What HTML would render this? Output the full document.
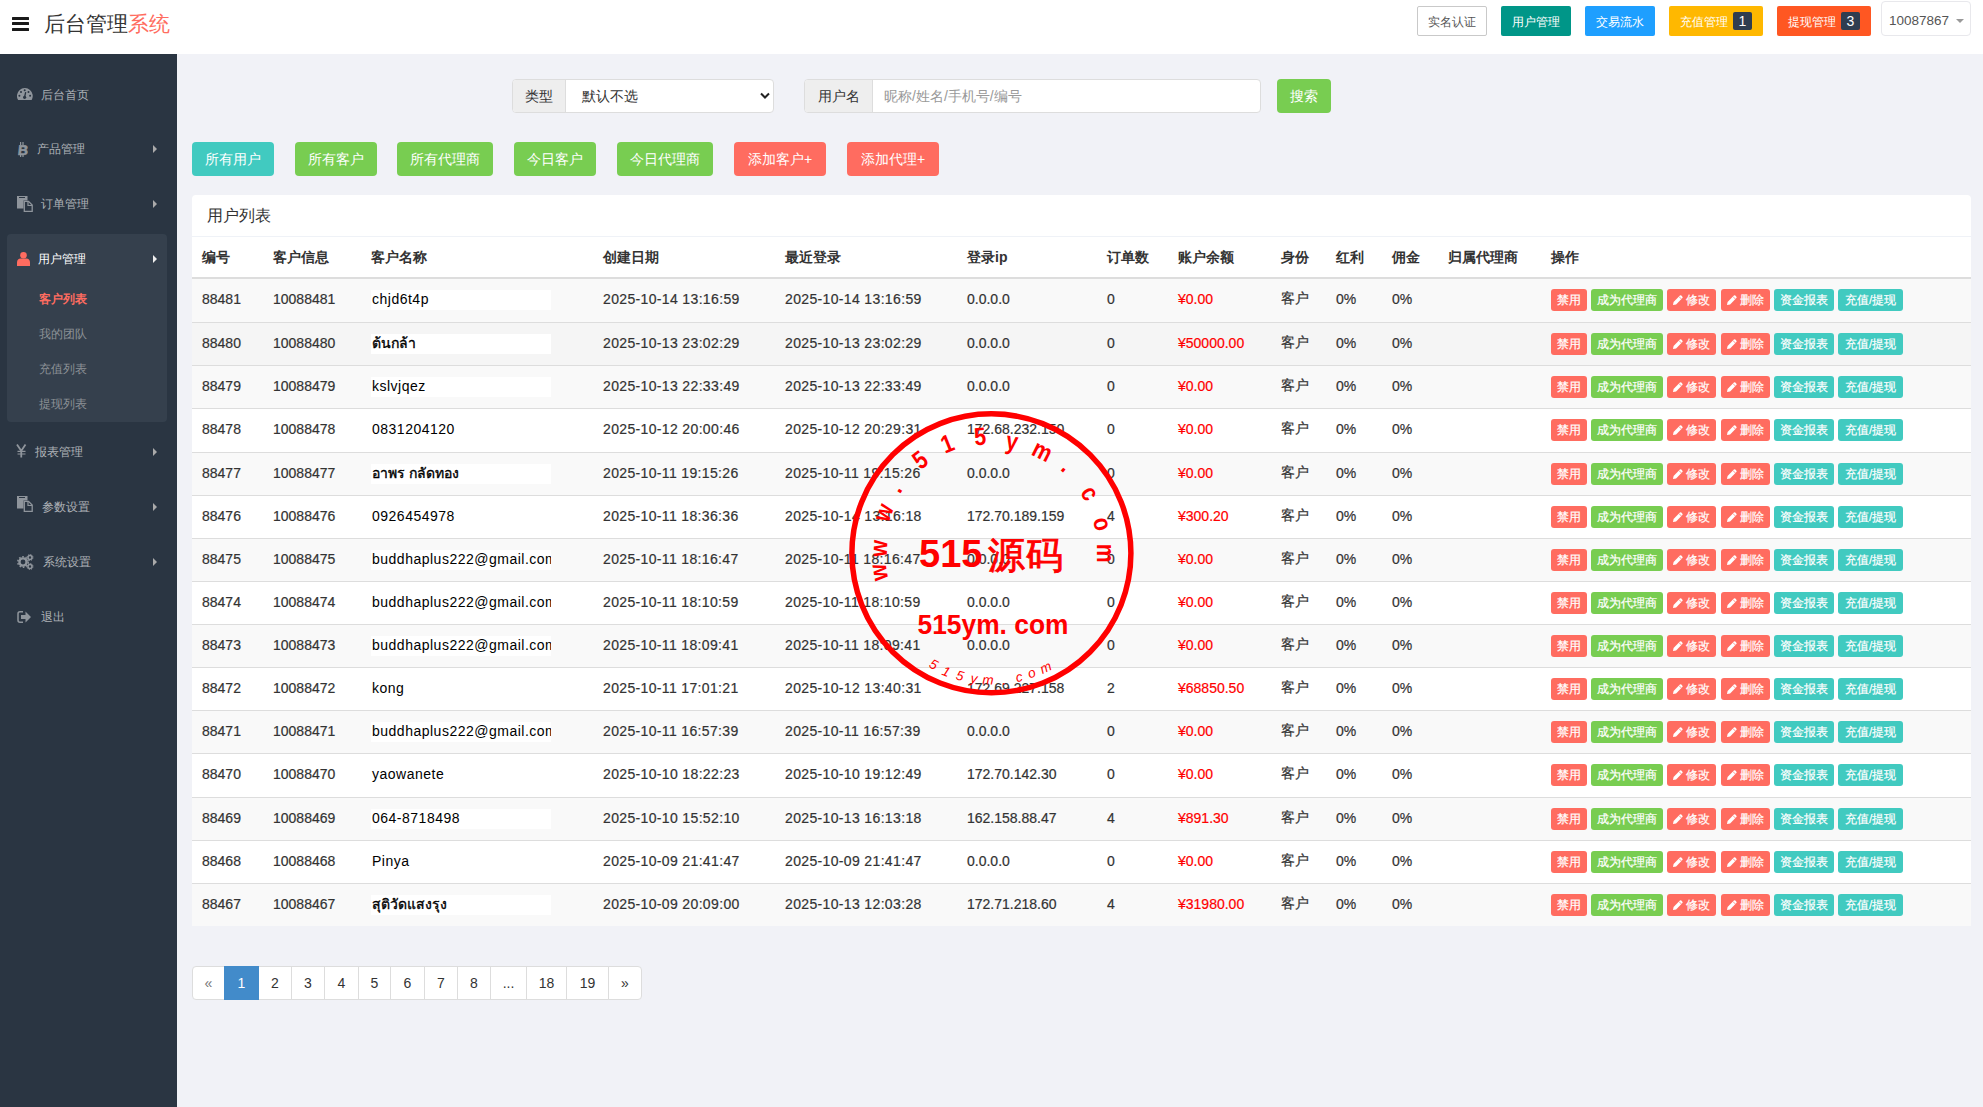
<!DOCTYPE html>
<html><head><meta charset="utf-8">
<style>
*{box-sizing:border-box;margin:0;padding:0}
html,body{width:1983px;height:1107px;overflow:hidden}
body{background:#f1f2f7;font-family:"Liberation Sans",sans-serif;color:#333;font-size:14px;position:relative}
.abs{position:absolute}
/* header */
#hdr{left:0;top:0;width:1983px;height:54px;background:#fff}
.bars{left:12px;top:17px;width:17px;height:14px}
.bars i{position:absolute;left:0;width:17px;height:3.2px;background:#1a1a1a;border-radius:0.5px}
.title{left:44px;top:9.5px;font-size:21px;line-height:28px;color:#333;white-space:nowrap}
.title span{color:#ff6c60}
.tb{top:6px;height:30px;line-height:32px;font-size:12px;color:#fff;text-align:center;border-radius:2px;white-space:nowrap}
.badge{display:inline-block;width:19px;height:18px;line-height:19px;background:#2f3d50;color:#fff;border-radius:2px;font-size:14px;vertical-align:0px;margin-left:5px}
#user{left:1881px;top:1px;width:90px;height:35px;border:1px solid #e8e8ec;border-radius:4px;background:#fff}
/* sidebar */
#side{left:0;top:54px;width:177px;height:1053px;background:#2a3542}
.mi{position:absolute;left:0;width:177px;height:20px;font-size:12px;color:#aeb2b7;white-space:nowrap}
.mi .t{position:absolute;top:2px;line-height:16px}
.mi svg{position:absolute}
.arr{position:absolute;left:153px;width:0;height:0;border-left:4px solid #aaa;border-top:4px solid transparent;border-bottom:4px solid transparent}
#act{left:7px;top:180px;width:160px;height:188px;background:#35404d;border-radius:4px}
/* content */
.ig{top:79px;height:34px;border:1px solid #ddd;border-radius:4px;background:#fff;overflow:hidden}
.ig .ad{position:absolute;left:0;top:0;height:32px;line-height:32px;background:#eee;border-right:1px solid #ddd;text-align:center;font-size:14px;color:#333}
.ig .v{position:absolute;top:0;height:32px;line-height:32px;font-size:14px}
.btn{position:absolute;height:34px;line-height:34px;color:#fff;font-size:14px;text-align:center;border-radius:4px;white-space:nowrap}
.g{background:#78cd51}.r{background:#ff6c60}.tq{background:#41cac0}
#panel{left:192px;top:195px;width:1779px;height:731px;background:#fff;border-radius:4px 4px 0 0}
#ph{position:absolute;left:0;top:0;width:100%;height:42px;border-bottom:1px solid #eff2f7}
#ph span{position:absolute;left:15px;top:11px;font-size:16px;line-height:20px;color:#333}
table{position:absolute;left:0;top:42px;width:1779px;border-collapse:separate;border-spacing:0;table-layout:fixed}
th{height:42px;text-align:left;font-weight:bold;font-size:14px;padding:2px 0 0 10px;border-bottom:2px solid #ddd;vertical-align:middle;white-space:nowrap}
td{-webkit-text-stroke:0.2px currentColor;padding:0 0 2px 10px;vertical-align:middle;white-space:nowrap;font-size:14px;color:#333;border-top:1px solid #ddd;overflow:hidden}
tbody tr{height:43.13px}
tbody tr:nth-child(odd){background:#f9f9f9}
tbody tr.hov{background:#f5f5f5}
tbody tr td{padding-bottom:0px}
tbody tr:first-child td{border-top:0;padding-bottom:2px}
.nm{display:block;width:180px;height:20px;line-height:18px;padding-bottom:2px;background:#fff;color:#000;padding-left:1px;overflow:hidden}
.m{color:#f00}
.tx{position:relative;top:-1px}
.dt{letter-spacing:0.35px}
.nm{letter-spacing:0.5px;-webkit-text-stroke:0}
.pc{display:inline-block;vertical-align:-1px;margin-right:3px}
.ab{display:inline-block;height:22px;line-height:22px;font-size:12px;color:#fff;border-radius:3px;padding:0 6px;margin-right:4px;vertical-align:middle}
/* pagination */
#pg{left:192px;top:966px;height:34px;display:flex}
#pg a{display:block;height:34px;line-height:32px;border:1px solid #ddd;margin-left:-1px;background:#fff;color:#333;text-align:center;font-size:14px}
#pg a:first-child{margin-left:0;border-radius:4px 0 0 4px}
#pg a:last-child{border-radius:0 4px 4px 0}
#pg a.on{background:#428bca;border-color:#428bca;color:#fff;position:relative}
</style></head><body>
<div id="hdr" class="abs">
  <div class="abs bars"><i style="top:0"></i><i style="top:5px"></i><i style="top:11px"></i></div>
  <div class="abs title">后台管理<span>系统</span></div>
  <div class="abs tb" style="left:1417px;width:70px;background:#fff;border:1px solid #c9c9c9;color:#555;line-height:30px">实名认证</div>
  <div class="abs tb" style="left:1501px;width:70px;background:#009688">用户管理</div>
  <div class="abs tb" style="left:1585px;width:70px;background:#1e9fff">交易流水</div>
  <div class="abs tb" style="left:1669px;width:94px;background:#ffb800">充值管理<span class="badge">1</span></div>
  <div class="abs tb" style="left:1777px;width:94px;background:#ff5722">提现管理<span class="badge">3</span></div>
  <div id="user" class="abs"><span class="abs" style="left:7px;top:9.5px;font-size:13.5px;line-height:18px;color:#555">10087867</span><span class="abs" style="left:74px;top:16.5px;border-top:4px solid #999;border-left:4px solid transparent;border-right:4px solid transparent;width:0;height:0"></span></div>
</div>
<div id="side" class="abs">
  <div id="act" class="abs"></div>
  <svg class="abs" style="left:17px;top:34px" width="16" height="12" viewBox="0 0 16 12"><path d="M1.1 12 A7.9 7.9 0 1 1 14.6 12 Z" fill="#8f959c"/><circle cx="7.7" cy="2.3" r="1" fill="#2a3542"/><circle cx="4" cy="3.9" r="1" fill="#2a3542"/><circle cx="11.5" cy="3.9" r="1" fill="#2a3542"/><circle cx="2.4" cy="7.8" r="1" fill="#2a3542"/><circle cx="13.1" cy="7.8" r="1" fill="#2a3542"/><path d="M8.7 4.2 L7.7 8.5" stroke="#2a3542" stroke-width="1.3"/><circle cx="7.6" cy="9.3" r="1.6" fill="#2a3542"/></svg>
  <div class="mi" style="top:31px"><span class="t" style="left:41px">后台首页</span></div>
  <svg class="abs" style="left:17px;top:88px" width="11" height="15" viewBox="0 0 11 15"><text x="0.3" y="12.6" font-family="Liberation Sans" font-weight="bold" font-size="14" fill="#8f959c" stroke="#8f959c" stroke-width="0.7" transform="translate(1.5 0) skewX(-6)">B</text><rect x="3" y="0" width="1.2" height="3" fill="#8f959c"/><rect x="5.4" y="0" width="1.2" height="3" fill="#8f959c"/><rect x="3" y="12" width="1.2" height="3" fill="#8f959c"/><rect x="5.4" y="12" width="1.2" height="3" fill="#8f959c"/></svg>
  <div class="mi" style="top:85px"><span class="t" style="left:37px">产品管理</span><i class="arr" style="top:6px"></i></div>
  <svg class="abs" style="left:17px;top:142px" width="16" height="16" viewBox="0 0 16 16"><path d="M0 0 H10.5 V4.5 H6.5 V12.5 H0 Z" fill="#8f959c"/><rect x="2" y="1" width="6" height="1" fill="#2a3542"/><path d="M7.3 5.3 H11.5 L15.2 9 V15.3 H7.3 Z" fill="none" stroke="#8f959c" stroke-width="1.3"/><path d="M11 5.5 V9.5 H15" fill="none" stroke="#8f959c" stroke-width="1.2"/></svg>
  <div class="mi" style="top:140px"><span class="t" style="left:41px">订单管理</span><i class="arr" style="top:6px"></i></div>
  <svg class="abs" style="left:17px;top:198px" width="13" height="14" viewBox="0 0 13 14"><circle cx="6.5" cy="3.3" r="3.3" fill="#ff6c60"/><path d="M0 14 V10.5 C0 8 1.6 6.6 3.6 6.6 H9.4 C11.4 6.6 13 8 13 10.5 V14 Z" fill="#ff6c60"/></svg>
  <div class="mi" style="top:195px;color:#fff"><span class="t" style="left:38px">用户管理</span><i class="arr" style="top:6px;border-left-color:#eee"></i></div>
  <div class="mi" style="top:235px;color:#ff6c60;font-weight:bold"><span class="t" style="left:39px">客户列表</span></div>
  <div class="mi" style="top:270px;color:#8c9196"><span class="t" style="left:39px">我的团队</span></div>
  <div class="mi" style="top:305px;color:#8c9196"><span class="t" style="left:39px">充值列表</span></div>
  <div class="mi" style="top:340px;color:#8c9196"><span class="t" style="left:39px">提现列表</span></div>
  <svg class="abs" style="left:16px;top:390px" width="12" height="14" viewBox="0 0 12 14"><path d="M1 0.5 L5 6.5 M9.5 0.5 L5.5 6.5 M5.25 6 V13.5" stroke="#8f959c" stroke-width="1.8" fill="none"/><path d="M1.5 7.3 H9.5 M1.5 10 H9.5" stroke="#8f959c" stroke-width="1.2"/></svg>
  <div class="mi" style="top:388px"><span class="t" style="left:35px">报表管理</span><i class="arr" style="top:6px"></i></div>
  <svg class="abs" style="left:17px;top:197px;top:442px" width="16" height="16" viewBox="0 0 16 16"><path d="M0 0 H10.5 V4.5 H6.5 V12.5 H0 Z" fill="#8f959c"/><rect x="2" y="1" width="6" height="1" fill="#2a3542"/><path d="M7.3 5.3 H11.5 L15.2 9 V15.3 H7.3 Z" fill="none" stroke="#8f959c" stroke-width="1.3"/><path d="M11 5.5 V9.5 H15" fill="none" stroke="#8f959c" stroke-width="1.2"/></svg>
  <div class="mi" style="top:443px"><span class="t" style="left:42px">参数设置</span><i class="arr" style="top:6px"></i></div>
  <svg class="abs" style="left:17px;top:500px" width="17" height="16" viewBox="0 0 17 16"><circle cx="6" cy="8" r="3.6" fill="none" stroke="#8f959c" stroke-width="2.4"/><circle cx="6" cy="8" r="5.2" fill="none" stroke="#8f959c" stroke-width="1.6" stroke-dasharray="1.6 1.7"/><circle cx="13" cy="3.5" r="2" fill="none" stroke="#8f959c" stroke-width="1.6"/><circle cx="13" cy="3.5" r="3" fill="none" stroke="#8f959c" stroke-width="1" stroke-dasharray="1.2 1.15"/><circle cx="13" cy="12.5" r="2" fill="none" stroke="#8f959c" stroke-width="1.6"/><circle cx="13" cy="12.5" r="3" fill="none" stroke="#8f959c" stroke-width="1" stroke-dasharray="1.2 1.15"/></svg>
  <div class="mi" style="top:498px"><span class="t" style="left:43px">系统设置</span><i class="arr" style="top:6px"></i></div>
  <svg class="abs" style="left:17px;top:557px" width="15" height="12" viewBox="0 0 15 12"><path d="M6 0.8 H3 C1.8 0.8 1 1.6 1 2.8 V9.2 C1 10.4 1.8 11.2 3 11.2 H6" fill="none" stroke="#8f959c" stroke-width="1.5"/><path d="M4 4 H8.5 V0.5 L14 6 L8.5 11.5 V8 H4 Z" fill="#8f959c"/></svg>
  <div class="mi" style="top:553px"><span class="t" style="left:41px">退出</span></div>
</div>
<!-- search -->
<div class="abs ig" style="left:512px;width:262px">
  <div class="ad" style="width:53px">类型</div>
  <div class="v" style="left:69px;color:#333">默认不选</div>
  <svg class="abs" style="left:247px;top:12px" width="10" height="8" viewBox="0 0 10 8"><path d="M1 1.5 L5 5.5 L9 1.5" stroke="#222" stroke-width="2" fill="none"/></svg>
</div>
<div class="abs ig" style="left:804px;width:457px">
  <div class="ad" style="width:68px">用户名</div>
  <div class="v" style="left:79px;color:#999">昵称/姓名/手机号/编号</div>
</div>
<div class="btn g" style="left:1277px;top:79px;width:54px">搜索</div>
<div class="btn tq" style="left:192px;top:142px;width:82px">所有用户</div>
<div class="btn g" style="left:295px;top:142px;width:82px">所有客户</div>
<div class="btn g" style="left:397px;top:142px;width:96px">所有代理商</div>
<div class="btn g" style="left:514px;top:142px;width:82px">今日客户</div>
<div class="btn g" style="left:617px;top:142px;width:96px">今日代理商</div>
<div class="btn r" style="left:734px;top:142px;width:92px">添加客户+</div>
<div class="btn r" style="left:847px;top:142px;width:92px">添加代理+</div>
<div id="panel" class="abs">
  <div id="ph"><span>用户列表</span></div>
  <table>
    <colgroup><col style="width:71px"><col style="width:98px"><col style="width:232px"><col style="width:182px"><col style="width:182px"><col style="width:140px"><col style="width:71px"><col style="width:103px"><col style="width:55px"><col style="width:56px"><col style="width:56px"><col style="width:103px"><col></colgroup>
    <thead><tr><th>编号</th><th>客户信息</th><th>客户名称</th><th>创建日期</th><th>最近登录</th><th>登录ip</th><th>订单数</th><th>账户余额</th><th>身份</th><th>红利</th><th>佣金</th><th>归属代理商</th><th>操作</th></tr></thead>
    <tbody id="tb">
<tr><td><span class="tx">88481</span></td><td><span class="tx">10088481</span></td><td><span class="nm">chjd6t4p</span></td><td class="dt"><span class="tx">2025-10-14 13:16:59</span></td><td class="dt"><span class="tx">2025-10-14 13:16:59</span></td><td><span class="tx">0.0.0.0</span></td><td><span class="tx">0</span></td><td class="m"><span class="tx">¥0.00</span></td><td><span class="tx">客户</span></td><td><span class="tx">0%</span></td><td><span class="tx">0%</span></td><td></td><td class="ops"><span class="ab r">禁用</span><span class="ab g">成为代理商</span><span class="ab r"><svg class="pc" width="10" height="10" viewBox="0 0 10 10"><path d="M0 10 L0.6 6.9 L6.9 0.6 Q7.6 0 8.3 0.6 L9.4 1.7 Q10 2.4 9.4 3.1 L3.1 9.4 Z" fill="#fff"/><path d="M6 1.6 L8.4 4" stroke="#ff6c60" stroke-width="0.7"/></svg>修改</span><span class="ab r" style="margin-left:1px"><svg class="pc" width="10" height="10" viewBox="0 0 10 10"><path d="M0 10 L0.6 6.9 L6.9 0.6 Q7.6 0 8.3 0.6 L9.4 1.7 Q10 2.4 9.4 3.1 L3.1 9.4 Z" fill="#fff"/><path d="M6 1.6 L8.4 4" stroke="#ff6c60" stroke-width="0.7"/></svg>删除</span><span class="ab tq">资金报表</span><span class="ab tq" style="padding:0 7px">充值/提现</span></td></tr>
<tr class="hov"><td><span class="tx">88480</span></td><td><span class="tx">10088480</span></td><td><span class="nm" style="letter-spacing:0;-webkit-text-stroke:0.35px #000">ต้นกล้า</span></td><td class="dt"><span class="tx">2025-10-13 23:02:29</span></td><td class="dt"><span class="tx">2025-10-13 23:02:29</span></td><td><span class="tx">0.0.0.0</span></td><td><span class="tx">0</span></td><td class="m"><span class="tx">¥50000.00</span></td><td><span class="tx">客户</span></td><td><span class="tx">0%</span></td><td><span class="tx">0%</span></td><td></td><td class="ops"><span class="ab r">禁用</span><span class="ab g">成为代理商</span><span class="ab r"><svg class="pc" width="10" height="10" viewBox="0 0 10 10"><path d="M0 10 L0.6 6.9 L6.9 0.6 Q7.6 0 8.3 0.6 L9.4 1.7 Q10 2.4 9.4 3.1 L3.1 9.4 Z" fill="#fff"/><path d="M6 1.6 L8.4 4" stroke="#ff6c60" stroke-width="0.7"/></svg>修改</span><span class="ab r" style="margin-left:1px"><svg class="pc" width="10" height="10" viewBox="0 0 10 10"><path d="M0 10 L0.6 6.9 L6.9 0.6 Q7.6 0 8.3 0.6 L9.4 1.7 Q10 2.4 9.4 3.1 L3.1 9.4 Z" fill="#fff"/><path d="M6 1.6 L8.4 4" stroke="#ff6c60" stroke-width="0.7"/></svg>删除</span><span class="ab tq">资金报表</span><span class="ab tq" style="padding:0 7px">充值/提现</span></td></tr>
<tr><td><span class="tx">88479</span></td><td><span class="tx">10088479</span></td><td><span class="nm">kslvjqez</span></td><td class="dt"><span class="tx">2025-10-13 22:33:49</span></td><td class="dt"><span class="tx">2025-10-13 22:33:49</span></td><td><span class="tx">0.0.0.0</span></td><td><span class="tx">0</span></td><td class="m"><span class="tx">¥0.00</span></td><td><span class="tx">客户</span></td><td><span class="tx">0%</span></td><td><span class="tx">0%</span></td><td></td><td class="ops"><span class="ab r">禁用</span><span class="ab g">成为代理商</span><span class="ab r"><svg class="pc" width="10" height="10" viewBox="0 0 10 10"><path d="M0 10 L0.6 6.9 L6.9 0.6 Q7.6 0 8.3 0.6 L9.4 1.7 Q10 2.4 9.4 3.1 L3.1 9.4 Z" fill="#fff"/><path d="M6 1.6 L8.4 4" stroke="#ff6c60" stroke-width="0.7"/></svg>修改</span><span class="ab r" style="margin-left:1px"><svg class="pc" width="10" height="10" viewBox="0 0 10 10"><path d="M0 10 L0.6 6.9 L6.9 0.6 Q7.6 0 8.3 0.6 L9.4 1.7 Q10 2.4 9.4 3.1 L3.1 9.4 Z" fill="#fff"/><path d="M6 1.6 L8.4 4" stroke="#ff6c60" stroke-width="0.7"/></svg>删除</span><span class="ab tq">资金报表</span><span class="ab tq" style="padding:0 7px">充值/提现</span></td></tr>
<tr><td><span class="tx">88478</span></td><td><span class="tx">10088478</span></td><td><span class="nm">0831204120</span></td><td class="dt"><span class="tx">2025-10-12 20:00:46</span></td><td class="dt"><span class="tx">2025-10-12 20:29:31</span></td><td><span class="tx">172.68.232.150</span></td><td><span class="tx">0</span></td><td class="m"><span class="tx">¥0.00</span></td><td><span class="tx">客户</span></td><td><span class="tx">0%</span></td><td><span class="tx">0%</span></td><td></td><td class="ops"><span class="ab r">禁用</span><span class="ab g">成为代理商</span><span class="ab r"><svg class="pc" width="10" height="10" viewBox="0 0 10 10"><path d="M0 10 L0.6 6.9 L6.9 0.6 Q7.6 0 8.3 0.6 L9.4 1.7 Q10 2.4 9.4 3.1 L3.1 9.4 Z" fill="#fff"/><path d="M6 1.6 L8.4 4" stroke="#ff6c60" stroke-width="0.7"/></svg>修改</span><span class="ab r" style="margin-left:1px"><svg class="pc" width="10" height="10" viewBox="0 0 10 10"><path d="M0 10 L0.6 6.9 L6.9 0.6 Q7.6 0 8.3 0.6 L9.4 1.7 Q10 2.4 9.4 3.1 L3.1 9.4 Z" fill="#fff"/><path d="M6 1.6 L8.4 4" stroke="#ff6c60" stroke-width="0.7"/></svg>删除</span><span class="ab tq">资金报表</span><span class="ab tq" style="padding:0 7px">充值/提现</span></td></tr>
<tr><td><span class="tx">88477</span></td><td><span class="tx">10088477</span></td><td><span class="nm" style="letter-spacing:0;-webkit-text-stroke:0.35px #000">อาพร กลัดทอง</span></td><td class="dt"><span class="tx">2025-10-11 19:15:26</span></td><td class="dt"><span class="tx">2025-10-11 19:15:26</span></td><td><span class="tx">0.0.0.0</span></td><td><span class="tx">0</span></td><td class="m"><span class="tx">¥0.00</span></td><td><span class="tx">客户</span></td><td><span class="tx">0%</span></td><td><span class="tx">0%</span></td><td></td><td class="ops"><span class="ab r">禁用</span><span class="ab g">成为代理商</span><span class="ab r"><svg class="pc" width="10" height="10" viewBox="0 0 10 10"><path d="M0 10 L0.6 6.9 L6.9 0.6 Q7.6 0 8.3 0.6 L9.4 1.7 Q10 2.4 9.4 3.1 L3.1 9.4 Z" fill="#fff"/><path d="M6 1.6 L8.4 4" stroke="#ff6c60" stroke-width="0.7"/></svg>修改</span><span class="ab r" style="margin-left:1px"><svg class="pc" width="10" height="10" viewBox="0 0 10 10"><path d="M0 10 L0.6 6.9 L6.9 0.6 Q7.6 0 8.3 0.6 L9.4 1.7 Q10 2.4 9.4 3.1 L3.1 9.4 Z" fill="#fff"/><path d="M6 1.6 L8.4 4" stroke="#ff6c60" stroke-width="0.7"/></svg>删除</span><span class="ab tq">资金报表</span><span class="ab tq" style="padding:0 7px">充值/提现</span></td></tr>
<tr><td><span class="tx">88476</span></td><td><span class="tx">10088476</span></td><td><span class="nm">0926454978</span></td><td class="dt"><span class="tx">2025-10-11 18:36:36</span></td><td class="dt"><span class="tx">2025-10-14 13:16:18</span></td><td><span class="tx">172.70.189.159</span></td><td><span class="tx">4</span></td><td class="m"><span class="tx">¥300.20</span></td><td><span class="tx">客户</span></td><td><span class="tx">0%</span></td><td><span class="tx">0%</span></td><td></td><td class="ops"><span class="ab r">禁用</span><span class="ab g">成为代理商</span><span class="ab r"><svg class="pc" width="10" height="10" viewBox="0 0 10 10"><path d="M0 10 L0.6 6.9 L6.9 0.6 Q7.6 0 8.3 0.6 L9.4 1.7 Q10 2.4 9.4 3.1 L3.1 9.4 Z" fill="#fff"/><path d="M6 1.6 L8.4 4" stroke="#ff6c60" stroke-width="0.7"/></svg>修改</span><span class="ab r" style="margin-left:1px"><svg class="pc" width="10" height="10" viewBox="0 0 10 10"><path d="M0 10 L0.6 6.9 L6.9 0.6 Q7.6 0 8.3 0.6 L9.4 1.7 Q10 2.4 9.4 3.1 L3.1 9.4 Z" fill="#fff"/><path d="M6 1.6 L8.4 4" stroke="#ff6c60" stroke-width="0.7"/></svg>删除</span><span class="ab tq">资金报表</span><span class="ab tq" style="padding:0 7px">充值/提现</span></td></tr>
<tr><td><span class="tx">88475</span></td><td><span class="tx">10088475</span></td><td><span class="nm">buddhaplus222@gmail.com</span></td><td class="dt"><span class="tx">2025-10-11 18:16:47</span></td><td class="dt"><span class="tx">2025-10-11 18:16:47</span></td><td><span class="tx">0.0.0.0</span></td><td><span class="tx">0</span></td><td class="m"><span class="tx">¥0.00</span></td><td><span class="tx">客户</span></td><td><span class="tx">0%</span></td><td><span class="tx">0%</span></td><td></td><td class="ops"><span class="ab r">禁用</span><span class="ab g">成为代理商</span><span class="ab r"><svg class="pc" width="10" height="10" viewBox="0 0 10 10"><path d="M0 10 L0.6 6.9 L6.9 0.6 Q7.6 0 8.3 0.6 L9.4 1.7 Q10 2.4 9.4 3.1 L3.1 9.4 Z" fill="#fff"/><path d="M6 1.6 L8.4 4" stroke="#ff6c60" stroke-width="0.7"/></svg>修改</span><span class="ab r" style="margin-left:1px"><svg class="pc" width="10" height="10" viewBox="0 0 10 10"><path d="M0 10 L0.6 6.9 L6.9 0.6 Q7.6 0 8.3 0.6 L9.4 1.7 Q10 2.4 9.4 3.1 L3.1 9.4 Z" fill="#fff"/><path d="M6 1.6 L8.4 4" stroke="#ff6c60" stroke-width="0.7"/></svg>删除</span><span class="ab tq">资金报表</span><span class="ab tq" style="padding:0 7px">充值/提现</span></td></tr>
<tr><td><span class="tx">88474</span></td><td><span class="tx">10088474</span></td><td><span class="nm">buddhaplus222@gmail.com</span></td><td class="dt"><span class="tx">2025-10-11 18:10:59</span></td><td class="dt"><span class="tx">2025-10-11 18:10:59</span></td><td><span class="tx">0.0.0.0</span></td><td><span class="tx">0</span></td><td class="m"><span class="tx">¥0.00</span></td><td><span class="tx">客户</span></td><td><span class="tx">0%</span></td><td><span class="tx">0%</span></td><td></td><td class="ops"><span class="ab r">禁用</span><span class="ab g">成为代理商</span><span class="ab r"><svg class="pc" width="10" height="10" viewBox="0 0 10 10"><path d="M0 10 L0.6 6.9 L6.9 0.6 Q7.6 0 8.3 0.6 L9.4 1.7 Q10 2.4 9.4 3.1 L3.1 9.4 Z" fill="#fff"/><path d="M6 1.6 L8.4 4" stroke="#ff6c60" stroke-width="0.7"/></svg>修改</span><span class="ab r" style="margin-left:1px"><svg class="pc" width="10" height="10" viewBox="0 0 10 10"><path d="M0 10 L0.6 6.9 L6.9 0.6 Q7.6 0 8.3 0.6 L9.4 1.7 Q10 2.4 9.4 3.1 L3.1 9.4 Z" fill="#fff"/><path d="M6 1.6 L8.4 4" stroke="#ff6c60" stroke-width="0.7"/></svg>删除</span><span class="ab tq">资金报表</span><span class="ab tq" style="padding:0 7px">充值/提现</span></td></tr>
<tr><td><span class="tx">88473</span></td><td><span class="tx">10088473</span></td><td><span class="nm">buddhaplus222@gmail.com</span></td><td class="dt"><span class="tx">2025-10-11 18:09:41</span></td><td class="dt"><span class="tx">2025-10-11 18:09:41</span></td><td><span class="tx">0.0.0.0</span></td><td><span class="tx">0</span></td><td class="m"><span class="tx">¥0.00</span></td><td><span class="tx">客户</span></td><td><span class="tx">0%</span></td><td><span class="tx">0%</span></td><td></td><td class="ops"><span class="ab r">禁用</span><span class="ab g">成为代理商</span><span class="ab r"><svg class="pc" width="10" height="10" viewBox="0 0 10 10"><path d="M0 10 L0.6 6.9 L6.9 0.6 Q7.6 0 8.3 0.6 L9.4 1.7 Q10 2.4 9.4 3.1 L3.1 9.4 Z" fill="#fff"/><path d="M6 1.6 L8.4 4" stroke="#ff6c60" stroke-width="0.7"/></svg>修改</span><span class="ab r" style="margin-left:1px"><svg class="pc" width="10" height="10" viewBox="0 0 10 10"><path d="M0 10 L0.6 6.9 L6.9 0.6 Q7.6 0 8.3 0.6 L9.4 1.7 Q10 2.4 9.4 3.1 L3.1 9.4 Z" fill="#fff"/><path d="M6 1.6 L8.4 4" stroke="#ff6c60" stroke-width="0.7"/></svg>删除</span><span class="ab tq">资金报表</span><span class="ab tq" style="padding:0 7px">充值/提现</span></td></tr>
<tr><td><span class="tx">88472</span></td><td><span class="tx">10088472</span></td><td><span class="nm">kong</span></td><td class="dt"><span class="tx">2025-10-11 17:01:21</span></td><td class="dt"><span class="tx">2025-10-12 13:40:31</span></td><td><span class="tx">172.69.227.158</span></td><td><span class="tx">2</span></td><td class="m"><span class="tx">¥68850.50</span></td><td><span class="tx">客户</span></td><td><span class="tx">0%</span></td><td><span class="tx">0%</span></td><td></td><td class="ops"><span class="ab r">禁用</span><span class="ab g">成为代理商</span><span class="ab r"><svg class="pc" width="10" height="10" viewBox="0 0 10 10"><path d="M0 10 L0.6 6.9 L6.9 0.6 Q7.6 0 8.3 0.6 L9.4 1.7 Q10 2.4 9.4 3.1 L3.1 9.4 Z" fill="#fff"/><path d="M6 1.6 L8.4 4" stroke="#ff6c60" stroke-width="0.7"/></svg>修改</span><span class="ab r" style="margin-left:1px"><svg class="pc" width="10" height="10" viewBox="0 0 10 10"><path d="M0 10 L0.6 6.9 L6.9 0.6 Q7.6 0 8.3 0.6 L9.4 1.7 Q10 2.4 9.4 3.1 L3.1 9.4 Z" fill="#fff"/><path d="M6 1.6 L8.4 4" stroke="#ff6c60" stroke-width="0.7"/></svg>删除</span><span class="ab tq">资金报表</span><span class="ab tq" style="padding:0 7px">充值/提现</span></td></tr>
<tr><td><span class="tx">88471</span></td><td><span class="tx">10088471</span></td><td><span class="nm">buddhaplus222@gmail.com</span></td><td class="dt"><span class="tx">2025-10-11 16:57:39</span></td><td class="dt"><span class="tx">2025-10-11 16:57:39</span></td><td><span class="tx">0.0.0.0</span></td><td><span class="tx">0</span></td><td class="m"><span class="tx">¥0.00</span></td><td><span class="tx">客户</span></td><td><span class="tx">0%</span></td><td><span class="tx">0%</span></td><td></td><td class="ops"><span class="ab r">禁用</span><span class="ab g">成为代理商</span><span class="ab r"><svg class="pc" width="10" height="10" viewBox="0 0 10 10"><path d="M0 10 L0.6 6.9 L6.9 0.6 Q7.6 0 8.3 0.6 L9.4 1.7 Q10 2.4 9.4 3.1 L3.1 9.4 Z" fill="#fff"/><path d="M6 1.6 L8.4 4" stroke="#ff6c60" stroke-width="0.7"/></svg>修改</span><span class="ab r" style="margin-left:1px"><svg class="pc" width="10" height="10" viewBox="0 0 10 10"><path d="M0 10 L0.6 6.9 L6.9 0.6 Q7.6 0 8.3 0.6 L9.4 1.7 Q10 2.4 9.4 3.1 L3.1 9.4 Z" fill="#fff"/><path d="M6 1.6 L8.4 4" stroke="#ff6c60" stroke-width="0.7"/></svg>删除</span><span class="ab tq">资金报表</span><span class="ab tq" style="padding:0 7px">充值/提现</span></td></tr>
<tr><td><span class="tx">88470</span></td><td><span class="tx">10088470</span></td><td><span class="nm">yaowanete</span></td><td class="dt"><span class="tx">2025-10-10 18:22:23</span></td><td class="dt"><span class="tx">2025-10-10 19:12:49</span></td><td><span class="tx">172.70.142.30</span></td><td><span class="tx">0</span></td><td class="m"><span class="tx">¥0.00</span></td><td><span class="tx">客户</span></td><td><span class="tx">0%</span></td><td><span class="tx">0%</span></td><td></td><td class="ops"><span class="ab r">禁用</span><span class="ab g">成为代理商</span><span class="ab r"><svg class="pc" width="10" height="10" viewBox="0 0 10 10"><path d="M0 10 L0.6 6.9 L6.9 0.6 Q7.6 0 8.3 0.6 L9.4 1.7 Q10 2.4 9.4 3.1 L3.1 9.4 Z" fill="#fff"/><path d="M6 1.6 L8.4 4" stroke="#ff6c60" stroke-width="0.7"/></svg>修改</span><span class="ab r" style="margin-left:1px"><svg class="pc" width="10" height="10" viewBox="0 0 10 10"><path d="M0 10 L0.6 6.9 L6.9 0.6 Q7.6 0 8.3 0.6 L9.4 1.7 Q10 2.4 9.4 3.1 L3.1 9.4 Z" fill="#fff"/><path d="M6 1.6 L8.4 4" stroke="#ff6c60" stroke-width="0.7"/></svg>删除</span><span class="ab tq">资金报表</span><span class="ab tq" style="padding:0 7px">充值/提现</span></td></tr>
<tr><td><span class="tx">88469</span></td><td><span class="tx">10088469</span></td><td><span class="nm">064-8718498</span></td><td class="dt"><span class="tx">2025-10-10 15:52:10</span></td><td class="dt"><span class="tx">2025-10-13 16:13:18</span></td><td><span class="tx">162.158.88.47</span></td><td><span class="tx">4</span></td><td class="m"><span class="tx">¥891.30</span></td><td><span class="tx">客户</span></td><td><span class="tx">0%</span></td><td><span class="tx">0%</span></td><td></td><td class="ops"><span class="ab r">禁用</span><span class="ab g">成为代理商</span><span class="ab r"><svg class="pc" width="10" height="10" viewBox="0 0 10 10"><path d="M0 10 L0.6 6.9 L6.9 0.6 Q7.6 0 8.3 0.6 L9.4 1.7 Q10 2.4 9.4 3.1 L3.1 9.4 Z" fill="#fff"/><path d="M6 1.6 L8.4 4" stroke="#ff6c60" stroke-width="0.7"/></svg>修改</span><span class="ab r" style="margin-left:1px"><svg class="pc" width="10" height="10" viewBox="0 0 10 10"><path d="M0 10 L0.6 6.9 L6.9 0.6 Q7.6 0 8.3 0.6 L9.4 1.7 Q10 2.4 9.4 3.1 L3.1 9.4 Z" fill="#fff"/><path d="M6 1.6 L8.4 4" stroke="#ff6c60" stroke-width="0.7"/></svg>删除</span><span class="ab tq">资金报表</span><span class="ab tq" style="padding:0 7px">充值/提现</span></td></tr>
<tr><td><span class="tx">88468</span></td><td><span class="tx">10088468</span></td><td><span class="nm">Pinya</span></td><td class="dt"><span class="tx">2025-10-09 21:41:47</span></td><td class="dt"><span class="tx">2025-10-09 21:41:47</span></td><td><span class="tx">0.0.0.0</span></td><td><span class="tx">0</span></td><td class="m"><span class="tx">¥0.00</span></td><td><span class="tx">客户</span></td><td><span class="tx">0%</span></td><td><span class="tx">0%</span></td><td></td><td class="ops"><span class="ab r">禁用</span><span class="ab g">成为代理商</span><span class="ab r"><svg class="pc" width="10" height="10" viewBox="0 0 10 10"><path d="M0 10 L0.6 6.9 L6.9 0.6 Q7.6 0 8.3 0.6 L9.4 1.7 Q10 2.4 9.4 3.1 L3.1 9.4 Z" fill="#fff"/><path d="M6 1.6 L8.4 4" stroke="#ff6c60" stroke-width="0.7"/></svg>修改</span><span class="ab r" style="margin-left:1px"><svg class="pc" width="10" height="10" viewBox="0 0 10 10"><path d="M0 10 L0.6 6.9 L6.9 0.6 Q7.6 0 8.3 0.6 L9.4 1.7 Q10 2.4 9.4 3.1 L3.1 9.4 Z" fill="#fff"/><path d="M6 1.6 L8.4 4" stroke="#ff6c60" stroke-width="0.7"/></svg>删除</span><span class="ab tq">资金报表</span><span class="ab tq" style="padding:0 7px">充值/提现</span></td></tr>
<tr><td><span class="tx">88467</span></td><td><span class="tx">10088467</span></td><td><span class="nm" style="letter-spacing:0;-webkit-text-stroke:0.35px #000">สุติวัดแสงรุง</span></td><td class="dt"><span class="tx">2025-10-09 20:09:00</span></td><td class="dt"><span class="tx">2025-10-13 12:03:28</span></td><td><span class="tx">172.71.218.60</span></td><td><span class="tx">4</span></td><td class="m"><span class="tx">¥31980.00</span></td><td><span class="tx">客户</span></td><td><span class="tx">0%</span></td><td><span class="tx">0%</span></td><td></td><td class="ops"><span class="ab r">禁用</span><span class="ab g">成为代理商</span><span class="ab r"><svg class="pc" width="10" height="10" viewBox="0 0 10 10"><path d="M0 10 L0.6 6.9 L6.9 0.6 Q7.6 0 8.3 0.6 L9.4 1.7 Q10 2.4 9.4 3.1 L3.1 9.4 Z" fill="#fff"/><path d="M6 1.6 L8.4 4" stroke="#ff6c60" stroke-width="0.7"/></svg>修改</span><span class="ab r" style="margin-left:1px"><svg class="pc" width="10" height="10" viewBox="0 0 10 10"><path d="M0 10 L0.6 6.9 L6.9 0.6 Q7.6 0 8.3 0.6 L9.4 1.7 Q10 2.4 9.4 3.1 L3.1 9.4 Z" fill="#fff"/><path d="M6 1.6 L8.4 4" stroke="#ff6c60" stroke-width="0.7"/></svg>删除</span><span class="ab tq">资金报表</span><span class="ab tq" style="padding:0 7px">充值/提现</span></td></tr>
</tbody>
  </table>
</div>
<div id="pg" class="abs">
  <a style="color:#777;width:33px">«</a><a class="on" style="width:35px">1</a><a style="width:34px">2</a><a style="width:34px">3</a><a style="width:35px">4</a><a style="width:33px">5</a><a style="width:35px">6</a><a style="width:34px">7</a><a style="width:34px">8</a><a style="width:37px">...</a><a style="width:41px">18</a><a style="width:43px">19</a><a style="width:34px">»</a>
</div>
<svg id="stamp" class="abs" style="left:0;top:0;pointer-events:none" width="1983" height="1107" viewBox="0 0 1983 1107">
<g fill="#f00" font-family="Liberation Sans" font-weight="bold">
<circle cx="991.4" cy="553.3" r="139.5" fill="none" stroke="#f00" stroke-width="5.5"/>
<text x="0" y="0" font-size="25" text-anchor="middle" dominant-baseline="central" transform="translate(878.4 572.6) rotate(-99.7) scale(0.85 1)">w</text>
<text x="0" y="0" font-size="25" text-anchor="middle" dominant-baseline="central" transform="translate(878.4 548.4) rotate(-87.5) scale(0.85 1)">w</text>
<text x="0" y="0" font-size="25" text-anchor="middle" dominant-baseline="central" transform="translate(883.1 512.6) rotate(-69.4) scale(0.85 1)">w</text>
<text x="0" y="0" font-size="25" text-anchor="middle" dominant-baseline="central" transform="translate(894.2 487.3) rotate(-55.8) scale(0.85 1)">.</text>
<text x="0" y="0" font-size="25" text-anchor="middle" dominant-baseline="central" transform="translate(920.1 459.8) rotate(-37.3) scale(0.85 1)">5</text>
<text x="0" y="0" font-size="25" text-anchor="middle" dominant-baseline="central" transform="translate(947.3 443.6) rotate(-21.9) scale(0.85 1)">1</text>
<text x="0" y="0" font-size="25" text-anchor="middle" dominant-baseline="central" transform="translate(980.1 436.3) rotate(-5.5) scale(0.85 1)">5</text>
<text x="0" y="0" font-size="25" text-anchor="middle" dominant-baseline="central" transform="translate(1012.0 441.0) rotate(10.4) scale(0.85 1)">y</text>
<text x="0" y="0" font-size="25" text-anchor="middle" dominant-baseline="central" transform="translate(1042.6 450.7) rotate(26.5) scale(0.85 1)">m</text>
<text x="0" y="0" font-size="25" text-anchor="middle" dominant-baseline="central" transform="translate(1067.6 465.0) rotate(40.8) scale(0.85 1)">.</text>
<text x="0" y="0" font-size="25" text-anchor="middle" dominant-baseline="central" transform="translate(1090.1 493.1) rotate(58.6) scale(0.85 1)">c</text>
<text x="0" y="0" font-size="25" text-anchor="middle" dominant-baseline="central" transform="translate(1102.7 523.7) rotate(75.1) scale(0.85 1)">o</text>
<text x="0" y="0" font-size="25" text-anchor="middle" dominant-baseline="central" transform="translate(1105.7 553.3) rotate(90.0) scale(0.85 1)">m</text>
<text x="919" y="567" font-size="38">515</text>
<text x="988" y="568" font-size="37" font-weight="normal" stroke="#f00" stroke-width="0.9" textLength="75">源码</text>
<text x="917.5" y="634" font-size="28" textLength="151" lengthAdjust="spacingAndGlyphs">515ym. com</text>
<text x="0" y="0" font-size="13.5" font-weight="normal" font-style="italic" text-anchor="middle" dominant-baseline="central" transform="translate(933.6 664.6) rotate(27.4)">5</text>
<text x="0" y="0" font-size="13.5" font-weight="normal" font-style="italic" text-anchor="middle" dominant-baseline="central" transform="translate(946.0 671.6) rotate(21.0)">1</text>
<text x="0" y="0" font-size="13.5" font-weight="normal" font-style="italic" text-anchor="middle" dominant-baseline="central" transform="translate(960.0 675.8) rotate(14.4)">5</text>
<text x="0" y="0" font-size="13.5" font-weight="normal" font-style="italic" text-anchor="middle" dominant-baseline="central" transform="translate(974.0 678.6) rotate(7.9)">y</text>
<text x="0" y="0" font-size="13.5" font-weight="normal" font-style="italic" text-anchor="middle" dominant-baseline="central" transform="translate(988.0 680.0) rotate(1.5)">m</text>
<text x="0" y="0" font-size="13.5" font-weight="normal" font-style="italic" text-anchor="middle" dominant-baseline="central" transform="translate(1003.6 680.0) rotate(-5.5)">.</text>
<text x="0" y="0" font-size="13.5" font-weight="normal" font-style="italic" text-anchor="middle" dominant-baseline="central" transform="translate(1019.0 677.0) rotate(-12.6)">c</text>
<text x="0" y="0" font-size="13.5" font-weight="normal" font-style="italic" text-anchor="middle" dominant-baseline="central" transform="translate(1031.6 673.0) rotate(-18.6)">o</text>
<text x="0" y="0" font-size="13.5" font-weight="normal" font-style="italic" text-anchor="middle" dominant-baseline="central" transform="translate(1045.6 667.4) rotate(-25.4)">m</text>
</g></svg>
</body></html>
